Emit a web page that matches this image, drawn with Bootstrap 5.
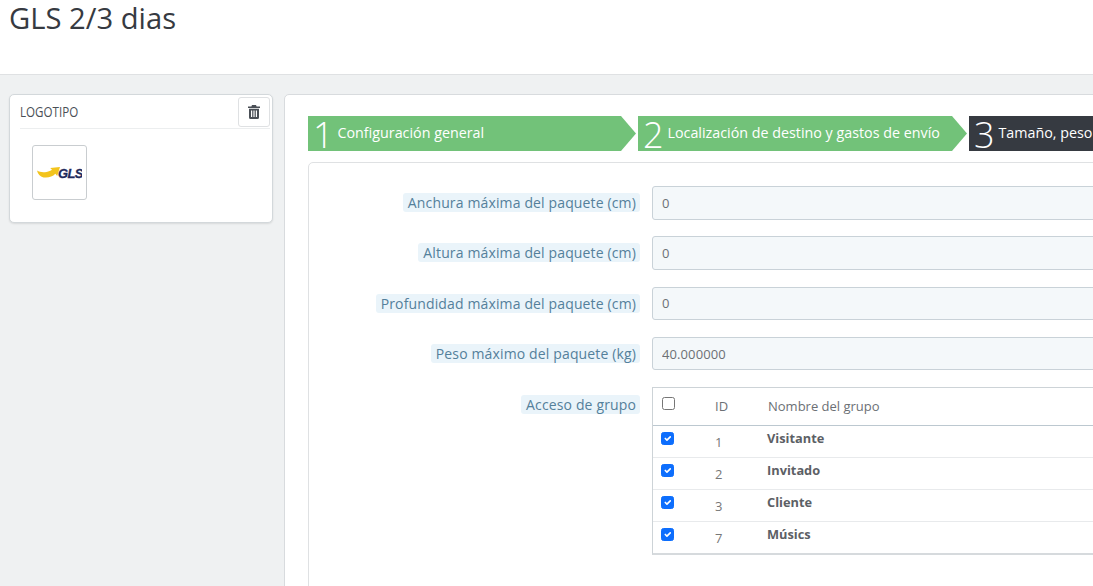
<!DOCTYPE html>
<html lang="es">
<head>
<meta charset="utf-8">
<title>GLS 2/3 dias</title>
<link rel="stylesheet" href="https://cdn.jsdelivr.net/npm/bootstrap@5.3.0/dist/css/bootstrap.min.css">
<style>
html,body{height:100%;overflow:hidden}
body{background:#eff1f2;font-family:"Open Sans","Noto Sans",sans-serif;color:#363a41;font-size:14px;width:1093px}
.page-top{height:75px;background:#fff;border-bottom:1px solid #dfe1e3;padding:0 9px}
.page-top h1{font-size:29.2px;font-weight:400;line-height:37px;margin:0;color:#363a41}
.work{padding:19px 0 0 9px;gap:11px;width:1400px}
.logo-panel{width:264px;height:129px;flex:none;background:#fff;border:1px solid #d3d8db;border-radius:5px;box-shadow:0 1px 2px rgba(0,0,0,.1);padding:0 2px 0 10px}
.logo-head{height:34px;border-bottom:1px solid #eceeef}
.logo-title{display:inline-block;font-family:"Open Sans",sans-serif;font-size:14.5px;color:#4a4f56;line-height:34px;transform:scaleX(.8);transform-origin:left center}
.trash-btn{width:32px;height:30px;padding:0;margin-top:2px;background:#fff;border:1px solid #dfe1e3;border-radius:3px;display:flex;align-items:center;justify-content:center}
.logo-thumb{width:55px;height:55px;margin:16px 0 0 12px;border:1px solid #c9cdd0;border-radius:3px;background:#fff;display:flex;align-items:center;justify-content:center}
.main-panel{width:1100px;height:540px;flex:none;background:#fff;border:1px solid #d8dbde;border-radius:5px;padding:21px 0 0 23px}
.steps{gap:2px;height:35px}
.step-item{height:35px;background:#72c279;color:#fff;display:flex;align-items:center;padding-left:5px;clip-path:polygon(0 0,calc(100% - 15px) 0,100% 50%,calc(100% - 15px) 100%,0 100%)}
.step-one{width:328px}
.step-two{width:329px}
.step-three{width:400px;background:#363a41;clip-path:none}
.step-num{font-size:36px;font-weight:300;line-height:35px;width:24.5px;flex:none;position:relative;top:1px}
.step-text{font-size:14.3px;line-height:33px;height:35px;white-space:nowrap}
.form-box{margin-top:11px;height:500px;border:1px solid #dfe1e3;border-radius:5px;padding:23px 0 0 0;width:1000px}
.form-line{display:flex;height:50.25px}
.label-side{width:331px;flex:none;text-align:right;padding-top:7px;line-height:19px}
.form-line:last-child .label-side{padding-top:8px}
.label-chip{display:inline-block;background:#eaf4fa;color:#54809b;font-size:14px;padding:0 4px 0 5px;border-radius:3px;letter-spacing:.14px}
.value-side{margin-left:12px;flex:1}
.value-side .form-control{height:33.500px;background:#f4f8fa;border:1px solid #c9d2d8;border-radius:3px;color:#6c7075;font-size:13px;letter-spacing:.1px;padding:0 9px;box-shadow:none}
.group-wrap{border:1px solid #cdd3d7;border-bottom:2px solid #d6dadd;height:168px}
.group-table{margin:0;width:100%;color:#6c7075;font-size:13px}
.group-table th,.group-table td{padding:0;vertical-align:top;border-bottom:1px solid #e8eaec;background:transparent;height:32px;box-shadow:none}
.group-table tbody tr:last-child td{border-bottom:0}
.group-table thead th{height:37px;font-weight:400;border-bottom:1px solid #bcc8d0;padding-top:9px;color:#6c7075}
.group-table .cell-check{width:62px;padding-left:8px}
.group-table .cell-id{width:52px}
.group-table tbody td{padding-top:6px}
.group-table tbody .cell-id{padding-top:7px;color:#777}
.group-table tbody .cell-name{font-weight:700;color:#5c6065;font-size:12.800px;padding-top:3px}
.group-table thead .cell-name{padding-left:1px}
.group-table .form-check-input{margin:0;width:13px;height:13px;border-radius:2.5px;border-color:#767676;display:block}
.group-table thead .form-check-input{margin-top:0;margin-left:1px}
.group-table .form-check-input:checked{background-color:#0d6efd;border-color:#0d6efd}
</style>
</head>
<body>
<header class="page-top"><h1>GLS 2/3 dias</h1></header>
<div class="work d-flex align-items-start">
  <aside class="logo-panel">
    <div class="logo-head d-flex justify-content-between">
      <span class="logo-title">LOGOTIPO</span>
      <button class="trash-btn" type="button" aria-label="Eliminar">
        <svg width="12" height="14" viewBox="0 0 12 14"><path fill="#4a4f56" d="M4 0h4l.6 1.5H12V3H0V1.500h3.400zM1 3.800h10V12.500A1.500 1.500 0 0 1 9.500 14h-7A1.500 1.500 0 0 1 1 12.500zM3 5.500v6.500h1.200V5.500zm2.400 0v6.500h1.200V5.500zm2.400 0v6.500H9V5.500z" fill-rule="evenodd"/></svg>
      </button>
    </div>
    <div class="logo-thumb">
      <svg width="45" height="18" viewBox="0 0 45 18">
        <path fill="#f3c41d" d="M0 6.500c2.500 1.600 6 2 9.500 1.400 2.500-.4 4-1.100 5.500-2.100l-1.800-1.900L23 3l-2.800 9-1.900-2.200C15.500 12.800 11 14.200 6.500 13.400 3 12.800 .8 10 0 6.500z"/>
        <text x="21" y="13.500" font-family="Liberation Sans, sans-serif" font-size="13" font-weight="700" font-style="italic" letter-spacing="-.7" stroke="#1f2a5c" stroke-width=".3" fill="#1f2a5c">GLS</text>
      </svg>
    </div>
  </aside>
  <main class="main-panel">
    <div class="steps d-flex">
      <div class="step-item step-one"><span class="step-num">1</span><span class="step-text">Configuración general</span></div>
      <div class="step-item step-two"><span class="step-num">2</span><span class="step-text">Localización de destino y gastos de envío</span></div>
      <div class="step-item step-three"><span class="step-num">3</span><span class="step-text">Tamaño, peso y grupo de acceso</span></div>
    </div>
    <div class="form-box">
      <div class="form-line"><div class="label-side"><span class="label-chip">Anchura máxima del paquete (cm)</span></div><div class="value-side"><input class="form-control" value="0"></div></div>
      <div class="form-line"><div class="label-side"><span class="label-chip">Altura máxima del paquete (cm)</span></div><div class="value-side"><input class="form-control" value="0"></div></div>
      <div class="form-line"><div class="label-side"><span class="label-chip">Profundidad máxima del paquete (cm)</span></div><div class="value-side"><input class="form-control" value="0"></div></div>
      <div class="form-line"><div class="label-side"><span class="label-chip">Peso máximo del paquete (kg)</span></div><div class="value-side"><input class="form-control" value="40.000000"></div></div>
      <div class="form-line"><div class="label-side"><span class="label-chip">Acceso de grupo</span></div><div class="value-side">
        <div class="group-wrap">
          <table class="table group-table">
            <thead><tr><th class="cell-check"><input class="form-check-input" type="checkbox"></th><th class="cell-id">ID</th><th class="cell-name">Nombre del grupo</th></tr></thead>
            <tbody>
              <tr><td class="cell-check"><input class="form-check-input" type="checkbox" checked></td><td class="cell-id">1</td><td class="cell-name">Visitante</td></tr>
              <tr><td class="cell-check"><input class="form-check-input" type="checkbox" checked></td><td class="cell-id">2</td><td class="cell-name">Invitado</td></tr>
              <tr><td class="cell-check"><input class="form-check-input" type="checkbox" checked></td><td class="cell-id">3</td><td class="cell-name">Cliente</td></tr>
              <tr><td class="cell-check"><input class="form-check-input" type="checkbox" checked></td><td class="cell-id">7</td><td class="cell-name">Músics</td></tr>
            </tbody>
          </table>
        </div>
      </div></div>
    </div>
  </main>
</div>
<script src="https://cdn.jsdelivr.net/npm/bootstrap@5.3.0/dist/js/bootstrap.bundle.min.js"></script>
</body>
</html>
